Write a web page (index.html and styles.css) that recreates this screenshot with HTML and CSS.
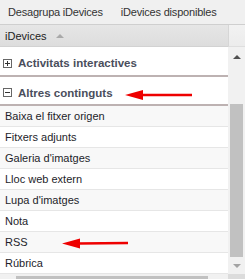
FILE: index.html
```html
<!DOCTYPE html>
<html>
<head>
<meta charset="utf-8">
<link rel="stylesheet" href="styles.css">
</head>
<body>
<div class="panel">
  <div class="toolbar">
    <span class="tool">Desagrupa iDevices</span>
    <span class="tool">iDevices disponibles</span>
  </div>
  <div class="grid-head">
    <div class="col-head"><span>iDevices</span><i class="sort"></i></div>
    <div class="col-corner"></div>
  </div>
  <div class="grid-body">
    <div class="list">
      <div class="group">
        <svg class="toggle" width="9" height="9" viewBox="0 0 9 9"><rect x="0.5" y="0.5" width="8" height="8" fill="#fff" stroke="#666"/><path d="M2 4.5H7M4.5 2V7" stroke="#333" stroke-width="1"/></svg>
        <span>Activitats interactives</span>
      </div>
      <div class="group group-open">
        <svg class="toggle" width="9" height="9" viewBox="0 0 9 9"><rect x="0.5" y="0.5" width="8" height="8" fill="#fff" stroke="#666"/><path d="M2 4.5H7" stroke="#333" stroke-width="1"/></svg>
        <span>Altres continguts</span>
      </div>
      <div class="item odd">Baixa el fitxer origen</div>
      <div class="item">Fitxers adjunts</div>
      <div class="item odd">Galeria d'imatges</div>
      <div class="item">Lloc web extern</div>
      <div class="item odd">Lupa d'imatges</div>
      <div class="item">Nota</div>
      <div class="item odd">RSS</div>
      <div class="item">Rúbrica</div>
    </div>
    <div class="vscroll">
      <div class="vbtn"><i class="up"></i></div>
      <div class="vtrack"><div class="vthumb"></div></div>
      <div class="vbtn"><i class="down"></i></div>
    </div>
  </div>
  <div class="hbar">
    <div class="htrack"><div class="hthumb"></div></div>
    <div class="hcorner"></div>
  </div>
  <svg class="arrows" width="245" height="279" viewBox="0 0 245 279">
    <line x1="141" y1="95" x2="192" y2="95" stroke="#ee0000" stroke-width="2.6"/>
    <polygon points="125,95 143,90 143,100" fill="#ee0000"/>
    <line x1="78" y1="243.5" x2="128" y2="243" stroke="#ee0000" stroke-width="2.6"/>
    <polygon points="62,243.5 80,238.5 80,248.5" fill="#ee0000"/>
  </svg>
</div>
</body>
</html>
```
FILE: styles.css
```css
html, body {
  margin: 0;
  padding: 0;
  background: #fff;
}
body {
  width: 245px;
  height: 279px;
  overflow: hidden;
  font-family: "Liberation Sans", Arial, sans-serif;
  font-size: 11px;
}
.panel {
  position: relative;
  width: 245px;
  height: 279px;
  display: flex;
  flex-direction: column;
}
.toolbar {
  height: 24px;
  background: #f0f0f0;
  border-bottom: 1px solid #cfcfcf;
  display: flex;
  align-items: center;
  padding-left: 8px;
  gap: 18px;
  color: #333;
  font-size: 11px;
  letter-spacing: -0.2px;
  flex: none;
}
.grid-head {
  display: flex;
  height: 22px;
  flex: none;
}
.col-head {
  width: 228px;
  box-sizing: border-box;
  background: linear-gradient(#e6e6e6, #dddddd);
  border-bottom: 1px solid #d2d2d2;
  display: flex;
  align-items: center;
  padding-left: 5px;
  color: #222;
  font-size: 11px;
}
.sort {
  width: 0;
  height: 0;
  border-left: 4px solid transparent;
  border-right: 4px solid transparent;
  border-bottom: 4px solid #a9a9a9;
  margin-left: 9px;
  margin-top: 1px;
}
.col-corner {
  flex: 1;
  background: linear-gradient(#f2f2f2, #ececec);
  border-left: 1px solid #d6d6d6;
  border-bottom: 1px solid #dedede;
}
.grid-body {
  display: flex;
  height: 227px;
  flex: none;
}
.list {
  width: 228px;
  overflow: hidden;
  background: #fff;
}
.group {
  box-sizing: border-box;
  display: flex;
  align-items: center;
  gap: 6px;
  padding: 9px 0 5px 3px;
  height: 30px;
  border-bottom: 2px solid #bdb2b2;
  color: #4a4e5c;
  font-weight: bold;
  font-size: 11.5px;
  line-height: 14px;
}
.group-open {
  height: 29px;
}
.toggle {
  flex: none;
}
.item {
  height: 20px;
  line-height: 20px;
  padding-left: 5px;
  border-bottom: 1px solid #e6e6e6;
  color: #1d1d2a;
  font-size: 11px;
}
.item.odd {
  background: #f8f8f8;
}
.vscroll {
  flex: 1;
  background: #f1f1f1;
  display: flex;
  flex-direction: column;
}
.vbtn {
  height: 17px;
  display: flex;
  align-items: center;
  justify-content: center;
  flex: none;
}
.vtrack {
  flex: 1;
  padding: 40px 2px 0 2px;
  display: flex;
  flex-direction: column;
}
.vthumb {
  flex: 1;
  background: #c1c1c1;
}
.up {
  width: 0;
  height: 0;
  border-left: 4px solid transparent;
  border-right: 4px solid transparent;
  border-bottom: 4px solid #505050;
  margin-top: 3px;
}
.down {
  width: 0;
  height: 0;
  border-left: 4px solid transparent;
  border-right: 4px solid transparent;
  border-top: 4px solid #a3a3a3;
}
.hbar {
  display: flex;
  flex: 1;
}
.htrack {
  width: 228px;
  background: #f1f1f1;
  padding: 2px 20px 0 16px;
  box-sizing: border-box;
  display: flex;
}
.hthumb {
  flex: 1;
  background: #c1c1c1;
}
.hcorner {
  flex: 1;
  background: #dcdcdc;
}
.arrows {
  position: absolute;
  left: 0;
  top: 0;
  pointer-events: none;
}
```
